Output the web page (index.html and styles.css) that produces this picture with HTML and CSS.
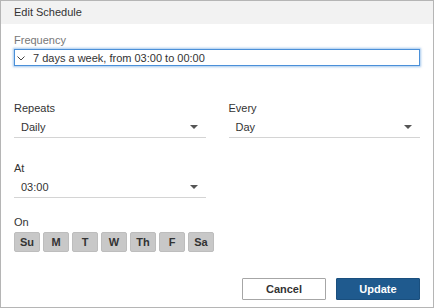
FILE: index.html
```html
<!DOCTYPE html>
<html>
<head>
<meta charset="utf-8">
<link rel="stylesheet" href="styles.css">
</head>
<body>
<div class="dialog">
  <div class="header">Edit Schedule</div>
  <div class="content">
    <div class="field freq">
      <div class="label muted">Frequency</div>
      <div class="freq-box">
        <svg class="chev" width="8" height="5" viewBox="0 0 8 5"><path d="M0.5 0.5 L4 4 L7.5 0.5" fill="none" stroke="#444" stroke-width="1"/></svg>
        <span>7 days a week, from 03:00 to 00:00</span>
      </div>
    </div>
    <div class="row">
      <div class="field sel-field">
        <div class="label">Repeats</div>
        <div class="select"><span>Daily</span><span class="tri"></span></div>
      </div>
      <div class="field sel-field">
        <div class="label">Every</div>
        <div class="select"><span>Day</span><span class="tri"></span></div>
      </div>
    </div>
    <div class="row at-row">
      <div class="field sel-field">
        <div class="label">At</div>
        <div class="select"><span>03:00</span><span class="tri"></span></div>
      </div>
    </div>
    <div class="field on">
      <div class="label">On</div>
      <div class="days">
        <span class="day">Su</span><span class="day">M</span><span class="day">T</span><span class="day">W</span><span class="day">Th</span><span class="day">F</span><span class="day">Sa</span>
      </div>
    </div>
  </div>
  <div class="footer">
    <button class="btn cancel">Cancel</button>
    <button class="btn update">Update</button>
  </div>
</div>
</body>
</html>
```
FILE: styles.css
```css
* { box-sizing: border-box; }
body {
  margin: 0;
  font-family: "Liberation Sans", Arial, sans-serif;
  font-size: 11px;
  color: #333;
  background: #fff;
}
.dialog {
  width: 434px;
  height: 308px;
  border: 1px solid #b5b5b5;
  display: flex;
  flex-direction: column;
}
.header {
  height: 23px;
  background: #f2f2f2;
  padding-left: 13px;
  line-height: 22px;
  color: #333;
}
.content {
  padding: 0 13px;
  flex: 1;
  display: flex;
  flex-direction: column;
}
.label {
  line-height: 14px;
}
.muted { color: #777; }
.freq { margin-top: 9px; }
.freq-box {
  margin-top: 2px;
  height: 17px;
  width: 406px;
  border: 1px solid #4a90d9;
  box-shadow: 0 0 2px 1px rgba(74,144,217,0.5);
  display: flex;
  align-items: center;
  padding-left: 2px;
  color: #333;
}
.chev { margin-right: 8px; margin-top: 1px; }
.row {
  display: flex;
  gap: 23px;
  margin-top: 35px;
}
.at-row { margin-top: 23px; }
.sel-field { width: 192px; }
.select {
  height: 22px;
  margin-top: 1px;
  border-bottom: 1px solid #d4d4d4;
  display: flex;
  align-items: center;
  justify-content: space-between;
  padding: 0 8px 0 7px;
}
.tri {
  width: 0;
  height: 0;
  border-left: 4px solid transparent;
  border-right: 4px solid transparent;
  border-top: 4px solid #555;
}
.on { margin-top: 17px; }
.days {
  display: flex;
  gap: 3px;
  margin-top: 3px;
}
.day {
  width: 26px;
  height: 20px;
  background: #c8c8c8;
  border: 1px solid #bdbdbd;
  border-radius: 2px;
  display: flex;
  align-items: center;
  justify-content: center;
  font-weight: bold;
  font-size: 11px;
  color: #333;
}
.footer {
  display: flex;
  justify-content: flex-end;
  gap: 10px;
  padding: 0 13px 7px 0;
}
.btn {
  width: 84px;
  height: 22px;
  font-family: "Liberation Sans", Arial, sans-serif;
  font-size: 11px;
  font-weight: bold;
  border-radius: 1px;
  padding: 0;
}
.cancel {
  background: #fff;
  border: 1px solid #a6a6a6;
  color: #333;
}
.update {
  background: #1f5a8e;
  border: 1px solid #1a4f7e;
  color: #fff;
}
```
